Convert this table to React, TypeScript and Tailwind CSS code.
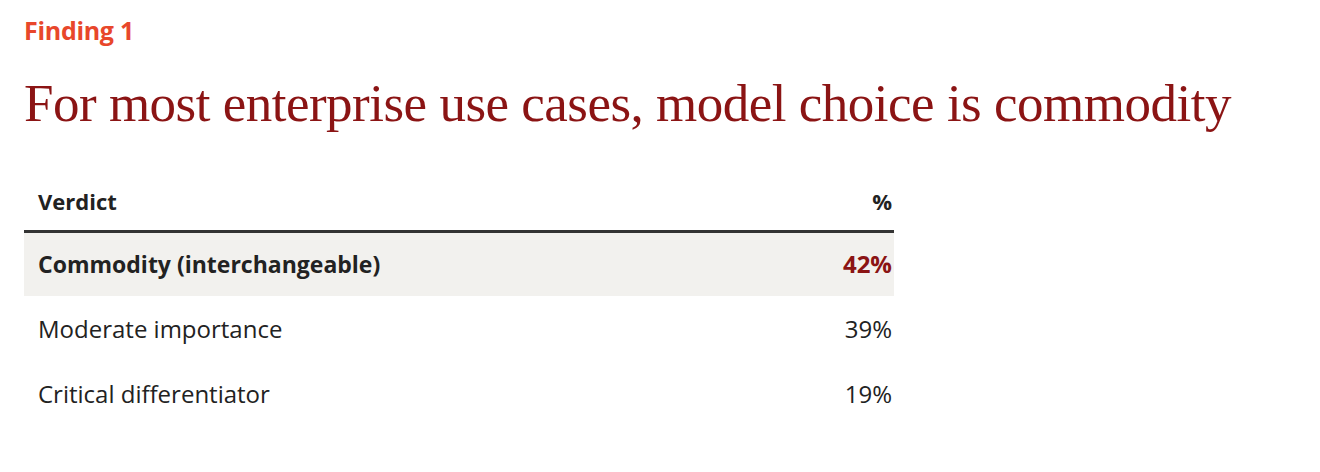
const rows = [
  { label: 'Commodity (interchangeable)', value: '42%', highlight: true },
  { label: 'Moderate importance', value: '39%' },
  { label: 'Critical differentiator', value: '19%' },
]

export default function App() {
  return (
    <div className="min-h-[472px] w-[1320px] bg-white px-6 pt-[14px] font-['Open_Sans','Lato',sans-serif] text-[#222]">
      <div className="text-[25px] font-bold leading-[32px] tracking-[-0.3px] text-[#e8472b]">Finding 1</div>
      <h1 className="mt-[27px] font-['Liberation_Serif',serif] text-[53px] leading-[60px] font-normal tracking-[-0.5px] text-[#8b1414]">
        For most enterprise use cases, model choice is commodity
      </h1>
      <table className="mt-[40px] w-[870px] border-collapse">
        <thead>
          <tr className="border-b-[3px] border-[#333] text-[22px]">
            <th className="h-[58px] pl-[14px] text-left align-middle font-bold">Verdict</th>
            <th className="w-[106px] pr-[2px] text-right align-middle font-bold">%</th>
          </tr>
        </thead>
        <tbody>
          {rows.map((r) => (
            <tr key={r.label} className={r.highlight ? 'bg-[#f2f1ee]' : ''}>
              <td
                className={`h-[65px] pl-[14px] align-middle ${r.highlight ? 'text-[23px] font-bold' : 'text-[24px]'}`}
              >
                {r.label}
              </td>
              <td
                className={`pr-[2px] text-right align-middle text-[24px] ${r.highlight ? 'font-bold text-[#8b1414]' : ''}`}
              >
                {r.value}
              </td>
            </tr>
          ))}
        </tbody>
      </table>
    </div>
  )
}
